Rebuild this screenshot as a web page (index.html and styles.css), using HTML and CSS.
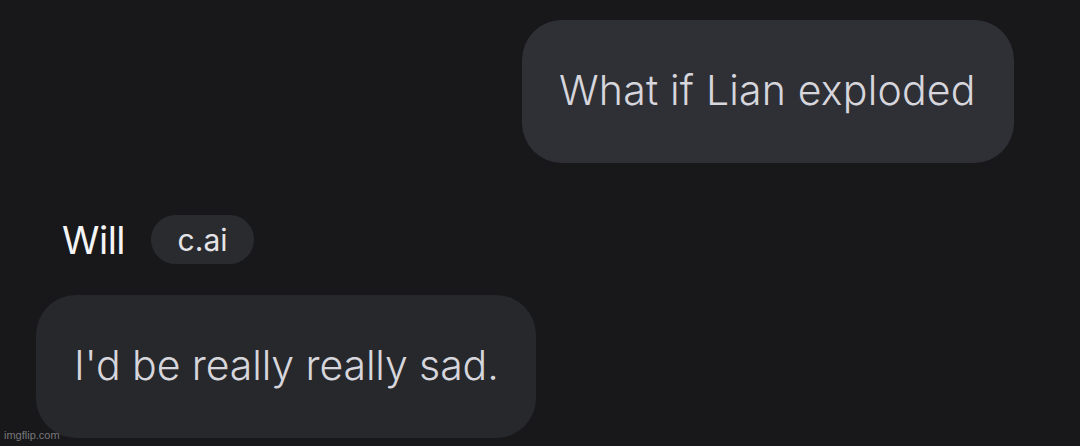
FILE: index.html
```html
<!DOCTYPE html>
<html>
<head>
<meta charset="utf-8">
<link rel="stylesheet" href="styles.css">
</head>
<body>
<div class="chat">
  <div class="row row-user">
    <div class="bubble bubble-user">What if Lian exploded</div>
  </div>
  <div class="author">
    <span class="author-name">Will</span>
    <span class="tag">c.ai</span>
  </div>
  <div class="row row-bot">
    <div class="bubble bubble-bot">I'd be really really sad.</div>
  </div>
</div>
<div class="watermark">imgflip.com</div>
</body>
</html>
```

FILE: styles.css
```css
html, body {
  margin: 0;
  padding: 0;
  background: #18181b;
  width: 1080px;
  height: 446px;
  overflow: hidden;
  font-family: Inter, "Noto Sans", sans-serif;
}
.chat {
  display: flex;
  flex-direction: column;
  padding: 20px 66px 0 36px;
}
.row {
  display: flex;
}
.row-user {
  justify-content: flex-end;
}
.bubble {
  display: flex;
  align-items: center;
  height: 143px;
  box-sizing: border-box;
  border-radius: 40px;
  padding-bottom: 4px;
  font-size: 41px;
  font-weight: 300;
  color: #d6d6dc;
}
.bubble-user {
  background: #2f3036;
  padding-left: 37px;
  padding-right: 20px;
  width: 492px;
  letter-spacing: 0.2px;
}
.bubble-bot {
  background: #27282c;
  padding-left: 38px;
  padding-right: 20px;
  width: 500px;
  letter-spacing: -0.1px;
}
.author {
  display: flex;
  align-items: center;
  gap: 26px;
  margin: 52px 0 31px 26px;
}
.author-name {
  font-size: 38px;
  color: #f4f4f5;
  font-weight: 400;
  letter-spacing: -0.5px;
}
.tag {
  display: flex;
  align-items: center;
  justify-content: center;
  height: 49px;
  width: 103px;
  box-sizing: border-box;
  border-radius: 25px;
  background: #2a2b2f;
  color: #e4e4e7;
  font-size: 30px;
}
.watermark {
  position: absolute;
  left: 4px;
  top: 429px;
  font-family: "Liberation Sans", Arial, sans-serif;
  font-size: 11px;
  color: rgba(200, 200, 200, 0.55);
}
```
